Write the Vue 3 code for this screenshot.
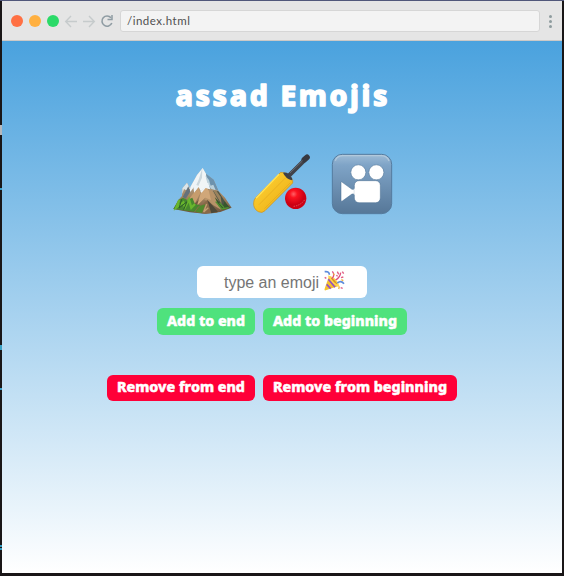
<script setup>
const emojis = ['mountain', 'cricket', 'cinema']
const groups = [
  { kind: 'add', buttons: [{ label: 'Add to end', w: 98 }, { label: 'Add to beginning', w: 144 }] },
  { kind: 'remove', buttons: [{ label: 'Remove from end', w: 148 }, { label: 'Remove from beginning', w: 194 }] },
]
const specks = [
  { y: 125, h: 10, c: '#b5b8bd' },
  { y: 188, h: 2, c: '#3c9fc8' },
  { y: 345, h: 5, c: '#3ba2c5' },
  { y: 388, h: 2, c: '#3c9fc8' },
  { y: 545, h: 2, c: '#319bc0' },
  { y: 548, h: 2, c: '#319bc0' },
]
</script>

<template>
  <div class="desktop">
    <i v-for="s in specks" :key="s.y" class="speck" :style="{ top: s.y + 'px', height: s.h + 'px', background: s.c }"></i>
    <div class="window">
      <header class="bar">
        <span class="dot red"></span><span class="dot amber"></span><span class="dot green"></span>
        <svg class="nav" width="36" height="20" viewBox="0 0 36 20" fill="none" stroke="#c6cbcc" stroke-width="1.4">
          <path d="M13 10.500H2M7 5 1.700 10.500 7 16" />
          <path d="M19 10.500H30M25 5 30.300 10.500 25 16" />
        </svg>
        <svg class="reload" width="14" height="14" viewBox="0 0 14 14" fill="none">
          <path d="M11 3.800A5.100 5.100 0 1 0 11.800 9" stroke="#8f9ca3" stroke-width="1.600" />
          <path d="M12 1v4.600H7.500" stroke="#8f9ca3" stroke-width="1.500" />
        </svg>
        <div class="address">/index.html</div>
        <div class="menu"><i></i><i></i><i></i></div>
      </header>
      <main>
        <h1><svg width="220" height="44" viewBox="0 0 220 44"><text x="3.500" y="30.500" textLength="212">assad Emojis</text></svg></h1>
        <div class="emojis">
          <svg v-for="e in emojis" :key="e" width="80" height="80" viewBox="0 0 240 240">
            <defs>
              <linearGradient id="bat" x1="0" y1="0" x2="1" y2="1"><stop stop-color="#ffd83a" /><stop offset=".65" stop-color="#f2b91f" /><stop offset="1" stop-color="#c98310" /></linearGradient>
              <radialGradient id="ball" cx=".4" cy=".3"><stop stop-color="#ff6267" /><stop offset=".35" stop-color="#fb1320" /><stop offset="1" stop-color="#cc0014" /></radialGradient>
              <linearGradient id="tile" x1="0" y1="0" x2="0" y2="1"><stop stop-color="#9ebcd6" /><stop offset=".18" stop-color="#7fa4c7" /><stop offset="1" stop-color="#567798" /></linearGradient>
              <linearGradient id="rock" x1="0" y1="0" x2="0" y2="1"><stop stop-color="#a8b9c1" /><stop offset=".6" stop-color="#a88863" /><stop offset="1" stop-color="#69503b" /></linearGradient>
            </defs>
            <g v-if="e === 'mountain'">
              <path d="M25 192 40 165 51 153 52 130 66 113 75 130 96 90 113 69 123 86 146 104 160 137 180 158 200 188 166 201 120 206 75 202Z" fill="url(#rock)" />
              <path d="M113 69 123 86 128 112 134 132 121 128 110 144 101 127 91 139 87 126 73 145 76 126 96 90Z" fill="#f1f5f6" />
              <path d="M123 86 146 104 160 137 149 132 140 121 136 132 128 116Z" fill="#6d92ad" />
              <path d="m121 91 11 14 5 17 8-3 7 17-14-5-11-17Z" fill="#bad0db" />
              <path d="M66 113 75 131 63 136 57 132 52 147 52 130Z" fill="#dce5e9" />
              <path d="M70 124 76 140 62 161 53 156Z" fill="#65717a" />
              <path d="M112 70 101 104 94 120 100 123 111 98Z" fill="#cbd7dd" />
              <path d="m90 139 11-12 5 17-19 37-20-12Z" fill="#c69c6d" />
              <path d="m128 134 13 3 18 30 9 27-34-20-19-13Z" fill="#b79369" />
              <path d="m110 144-6 18-23 22 9 5 31-31 10-25Z" fill="#745940" />
              <path d="M110 136 124 126 131 136 138 165 121 158 107 172 96 182 103 158Z" fill="#d0a779" />
              <path d="M97 103 87 122 89 137 99 123M127 113 132 129 121 126 108 142" fill="none" stroke="#edf4f8" stroke-width="5" />
              <path d="M144 137 160 139 184 176 198 189 173 189Z" fill="#4b5547" />
              <path d="m145 137 25 41-3-23-14-19Z" fill="#9b825c" />
              <path d="M25 192 41 165 54 158 67 165 82 158 90 177 105 181 91 201 66 197Z" fill="#47882e" />
              <path d="m43 165-9 22 21-15 5 15 12-23 7 24 11-11" fill="none" stroke="#68b62d" stroke-width="7" />
              <path d="m50 163-8 26 24-19-10 24" fill="none" stroke="#2c5d2a" stroke-width="3" />
              <path d="M87 201 99 185 111 180 127 164 141 178 158 203 120 206Z" fill="#896949" />
              <path d="M90 200 105 182 121 178 111 204Z" fill="#4f892d" />
              <path d="m127 166 15 15 17 19-20 5Z" fill="#4d4939" />
              <path d="m125 177-9 24 14-13" fill="none" stroke="#c1a071" stroke-width="4" />
              <path d="m149 156 13 29 12 9 20-5-15-20-5 14Z" fill="#38562e" />
              <path d="m152 170 19 22 20-4M164 174l13 14" fill="none" stroke="#529532" stroke-width="4" />
            </g>
            <g v-else-if="e === 'cricket'">
              <path d="m130 94 52-52" stroke="#41434a" stroke-width="13" stroke-linecap="round" />
              <path d="m178 44 8-7" stroke="#373941" stroke-width="17" stroke-linecap="round" />
              <path d="m135 84 38-37" stroke="#666970" stroke-width="3" />
              <path d="M107 82Q117 82 128 87L139 99Q145 107 143 114L60 197Q52 206 40 200 24 191 26 173 26 164 33 157Z" fill="url(#bat)" stroke="#cc901b" stroke-width="2" />
              <path d="M102 88 33 160" stroke="#ffe45a" stroke-width="4" />
              <path d="M122 98 42 179M136 113 58 191" stroke="#d99c19" stroke-width="2" opacity=".6" />
              <path d="M114 83Q125 82 131 87L141 99Q144 105 140 106 122 101 114 83Z" fill="#3d4047" />
              <circle cx="152" cy="160" r="32" fill="url(#ball)" />
              <path d="M146 184Q168 181 180 163" fill="none" stroke="#f2a8a2" stroke-width="2" stroke-dasharray="4 3" opacity=".75" />
            </g>
            <g v-else>
              <rect x="22" y="28" width="178" height="178" rx="30" fill="url(#tile)" stroke="#557b9e" stroke-width="3" />
              <path d="M31 47Q36 32 54 32H168Q187 32 192 48" fill="none" stroke="#b9cddd" stroke-width="4" opacity=".8" />
              <g fill="#fff" stroke="#456b8f" stroke-width="1.500">
                <circle cx="100" cy="82" r="22.500" /><circle cx="154" cy="82" r="22.500" />
                <rect x="88" y="107" width="78" height="66" rx="14" />
                <path d="M48 112Q48 109 52 112L81 133H88V147H81L52 168Q48 170 48 166Z" />
              </g>
              <path d="M88 131V149" stroke="#fff" stroke-width="3" />
            </g>
          </svg>
        </div>
        <div class="field">
          <span class="hint"><svg width="98" height="28" viewBox="0 0 98 28"><text x="1" y="18.500" textLength="95" lengthAdjust="spacingAndGlyphs">type an emoji</text></svg></span>
          <svg class="party" width="22" height="22" viewBox="0 0 66 66">
            <path d="M18 19Q37 26 47 48L8 61Q3 62 5 56Z" fill="#f5c12c" />
            <path d="M16 28 36 52M11 43 23 56" stroke="#9351c5" stroke-width="5" />
            <path d="M18 19Q39 23 47 48 30 42 18 19Z" fill="#d79425" stroke="#ffd452" stroke-width="4" />
            <path d="M27 26Q37 15 28 4M38 30Q51 23 53 8" fill="none" stroke="#df507c" stroke-width="4" />
            <path d="M5 5Q19 3 19 14M43 39Q54 30 63 41" fill="none" stroke="#5d8bdb" stroke-width="5" />
            <path d="m43 5 4 8m11-8 4 6m-8 12 7-2M53 53l6 2M5 22l5 3M40 16l4 3" stroke="#e15d83" stroke-width="4" />
            <path d="m31 11 3 4m21 14 6 3M49 50l-2 7" stroke="#f2b33c" stroke-width="4" />
          </svg>
        </div>
        <div v-for="g in groups" :key="g.kind" class="row" :class="g.kind">
          <button v-for="b in g.buttons" :key="b.label" :style="{ width: b.w + 'px' }">
            <svg :width="b.w" height="26" :viewBox="`0 0 ${b.w} 26`"><text x="10" y="16.500" :textLength="b.w - 20" lengthAdjust="spacingAndGlyphs">{{ b.label }}</text></svg>
          </button>
        </div>
      </main>
    </div>
  </div>
</template>

<style>
body { margin: 0; background: #191617; }
</style>
<style scoped>
* { box-sizing: border-box; }
svg { display: block; flex: none; }
.desktop { position: relative; width: 564px; height: 576px; padding: 1px 2px 3px; background: #191617; overflow: hidden; box-shadow: inset 0 1px #50577a; }
.speck { position: absolute; left: 0; width: 2px; }
.window { height: 572px; display: flex; flex-direction: column; }
.bar { height: 40px; flex: none; display: flex; align-items: center; padding: 0 10px 0 9px; background: #e5e5e5; border-bottom: 1px solid #cbc9c7; }
.dot { width: 12px; height: 12px; border-radius: 50%; margin-right: 6px; }
.red { background: #ff7043; }
.amber { background: #ffb040; }
.green { background: #2bda68; }
.nav { margin-left: -1px; }
.reload { margin: 0 6px 0 0; }
.address { width: 420px; height: 22px; border: 1px solid #d6d6d6; border-radius: 3px; background: #f3f3f3; padding-left: 6px; font: 11.500px/20px Lato, sans-serif; letter-spacing: .5px; color: #505050; }
.menu { display: flex; flex-direction: column; gap: 2px; margin: 1px 0 0 auto; }
.menu i { width: 3px; height: 3px; border-radius: 50%; background: #8e9c9e; }
main { flex: 1; display: flex; flex-direction: column; align-items: center; background: linear-gradient(#4aa2de, #fff); }
h1 { margin: 34px 0 0; height: 44px; }
h1 text { font: 800 28.500px "Noto Sans", sans-serif; fill: #fff; stroke: #fff; stroke-width: 1.300; stroke-linejoin: round; }
.emojis { display: flex; margin: 26px 0 0 6px; }
.field { width: 170px; height: 32px; margin-top: 41px; padding-left: 26px; display: flex; align-items: center; background: #fff; border-radius: 6px; }
.hint { width: 100px; margin-top: 1px; }
.party { margin-top: -2px; }
.field text { font: 16px "Liberation Sans", sans-serif; fill: #757575; }
.row { display: flex; gap: 8px; margin-top: 10px; }
.remove { margin-top: 40px; }
button { height: 27px; padding: 0; border: 0; border-radius: 6px; overflow: hidden; }
.add button { background: #4fe27d; }
.remove button { background: #ff0038; height: 26px; }
button text { font: 800 14.500px "Noto Sans", sans-serif; fill: #fff; stroke: #fff; stroke-width: .5; stroke-linejoin: round; }
</style>
